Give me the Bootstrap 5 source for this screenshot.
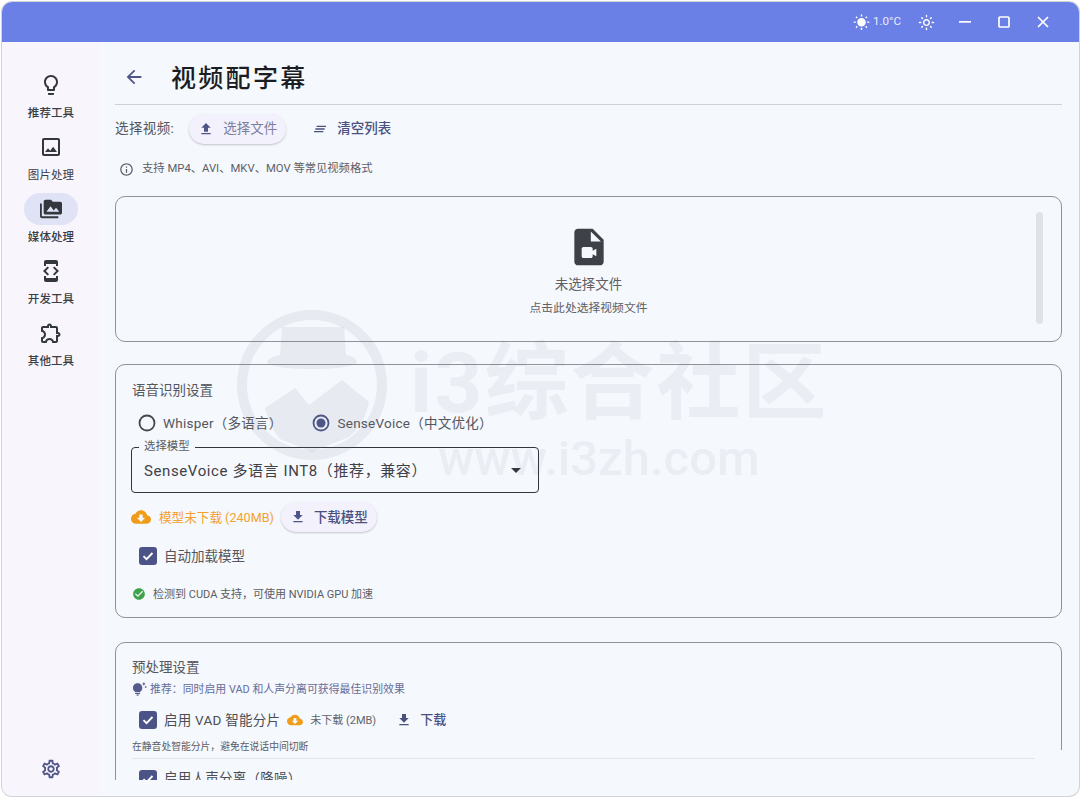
<!DOCTYPE html>
<html lang="zh">
<head>
<meta charset="utf-8">
<title>视频配字幕</title>
<link href="https://cdn.jsdelivr.net/npm/bootstrap@5.3.0/dist/css/bootstrap.min.css" rel="stylesheet">
<style>
html,body{height:100%;overflow:hidden;background:#fff;}
body{font-family:Roboto,"Noto Sans CJK SC",sans-serif;color:#45474f;font-size:13.5px;line-height:1.2;}
svg{fill:currentColor;flex:none;display:block;}
.appwin{position:relative;margin:2px 0 0 2px;width:1077px;height:794px;border-radius:10px;overflow:hidden;background:#f5f8fc;box-shadow:0 0 0 1px #d2d3d6;}
.tbar{height:40px;background:#6a80e6;color:#fff;padding-right:17px;}
.tempval{font-size:11.6px;opacity:.85;margin-left:3px;margin-right:17px;}
.tbtn{width:39px;height:24px;}
.tfirst{margin-left:10px;}
.sidecol{width:98px;background:#f8f5fc;padding-top:27px;}
.sideitem{height:62px;color:#35373e;}
.sidepill{width:54px;height:32px;border-radius:16px;}
.sidepill.on{background:#dfe3f5;}
.sidelabel{font-size:11.5px;margin-top:6px;color:#3b3d44;font-weight:500;letter-spacing:.1px;}
.sidelabel.thin{font-weight:400;}
.gearbtn{margin-top:auto;padding-bottom:16px;color:#4f5687;}
.contentclip{height:738px;overflow:hidden;padding:0 17px 0 15px;}
.headrow{height:63px;padding-top:8px;border-bottom:1px solid #cdd1d8;}
.backic{color:#4f5687;margin-left:8px;margin-right:26px;}
.pagetitle{font-size:25px;font-weight:500;color:#1c1d22;letter-spacing:2.3px;margin:2px 0 0;line-height:1;}
.toolrow{height:48px;padding-bottom:1px;}
.choosetxt{letter-spacing:.4px;margin-right:15px;color:#54565d;}
.pillbtn{height:30px;border-radius:15px;background:#f3f1fb;box-shadow:0 1px 2px rgba(60,60,90,.28);color:#7c7e9d;padding:0 9px;gap:9px;border:0;font-size:13.5px;}
.pillbtn svg{color:#4f5687;}
.darktxt{color:#4a5080;font-weight:500;gap:8px;}
.flatbtn{color:#4a5080;font-weight:500;gap:9px;padding:0 9px;margin-left:17px;}
.infonote{font-size:11.3px;color:#5d5f67;gap:8px;padding-left:4px;height:24px;margin-top:4px;}
.framebox{border:1px solid #8e9299;border-radius:10px;position:relative;}
.dropbox{height:146px;margin-top:15px;padding-top:4px;}
.dropicon{color:#3f4149;margin-top:-2px;}
.droptitle{font-size:13.5px;color:#5e6066;margin-top:7px;}
.dropsub{font-size:11.8px;color:#5e6066;margin-top:8px;}
.scrollthumb{position:absolute;right:18px;top:15px;width:7px;height:112px;border-radius:4px;background:#dfe2e7;}
.setbox1{height:254px;margin-top:22px;padding:17px 16px 0 16px;}
.setbox2{height:300px;margin-top:24px;padding:16px 16px 0 16px;}
.settitle{font-size:13.5px;color:#54565d;}
.radiorow{height:28px;margin-top:11px;font-size:13.5px;color:#54565d;letter-spacing:.25px;}
.radiodot{width:18px;height:18px;margin-left:6px;margin-right:7px;}
.radiogap{margin-left:30px;}
.selectbox{position:relative;width:408px;height:46px;margin-top:10px;margin-left:-1px;border:1.5px solid #34363d;border-radius:4px;padding:1px 12px 0;font-size:15px;letter-spacing:.6px;color:#3f4148;}
.selectlegend{position:absolute;left:7px;top:-8px;padding:0 5px;font-size:11.4px;letter-spacing:0;color:#5b5d64;background:#f5f8fc;line-height:13px;}
.caretmark{position:absolute;right:17px;top:20px;width:0;height:0;border-left:5px solid transparent;border-right:5px solid transparent;border-top:5px solid #35373e;}
.modelrow{margin-top:9px;height:30px;margin-left:-1px;}
.warntxt{color:#f4a12e;font-size:12.6px;margin-left:8px;margin-right:7px;}
.warnic{color:#f09c19;}
.tickrow{margin-top:9px;height:30px;padding-left:7px;color:#54565d;gap:7px;}
.tickbox{width:18px;height:18px;border-radius:3px;background:#4b5387;color:#fff;}
.greenrow{margin-top:16px;font-size:11px;color:#5b5d64;gap:7px;}
.greenic{color:#3fa14a;}
.tiprow{font-size:10.9px;color:#686c9a;margin-top:7px;gap:3px;}
.tiprow svg{color:#565b8d;}
.vadrow{margin-top:8px;height:30px;padding-left:7px;color:#4b4d54;gap:7px;letter-spacing:.25px;}
.minitxt{font-size:11px;color:#62646b;letter-spacing:0;margin-right:12px;}
.dlflat{color:#4a5080;font-size:13px;font-weight:500;gap:8px;margin-left:1px;letter-spacing:0;}
.subnote{font-size:9.8px;color:#5b5d64;margin-top:2px;height:21px;padding-top:4px;}
.lastrow{margin-right:-60px;border-top:1px solid #e4e6ea;background:#f5f8fc;position:relative;z-index:1;height:40px;padding:11px 0 0 7px;gap:7px;color:#4b4d54;letter-spacing:.25px;}
.lastrow::before{content:"";position:absolute;right:0;top:-9px;width:70px;height:9px;background:#f5f8fc;}
.markoverlay{position:absolute;left:0;top:0;width:100%;height:100%;pointer-events:none;z-index:5;}
.markcircle{position:absolute;left:234px;top:307px;}
.markname{position:absolute;left:408px;top:332px;font-size:84px;line-height:100px;font-weight:700;color:rgba(110,120,135,.08);letter-spacing:2px;white-space:nowrap;}
.markurl{position:absolute;left:436px;top:427px;font-size:49px;line-height:60px;font-weight:500;color:rgba(110,120,135,.08);white-space:nowrap;}
</style>
</head>
<body>
<div class="appwin d-flex flex-column">
  <div class="tbar d-flex align-items-center justify-content-end flex-shrink-0">
    <svg width="17" height="17" viewBox="0 0 24 24"><path d="M6.76 4.84l-1.8-1.79-1.41 1.41 1.79 1.79 1.42-1.41zM4 10.5H1v2h3v-2zm9-9.95h-2V3.5h2V.55zm7.45 3.91l-1.41-1.41-1.79 1.79 1.41 1.41 1.79-1.79zm-3.21 13.7l1.79 1.8 1.41-1.41-1.8-1.79-1.4 1.4zM20 10.5v2h3v-2h-3zm-8-5c-3.31 0-6 2.69-6 6s2.69 6 6 6 6-2.69 6-6-2.69-6-6-6zm-1 16.95h2V19.5h-2v2.95zm-7.45-3.91l1.41 1.41 1.79-1.8-1.41-1.41-1.79 1.8z"/></svg>
    <span class="tempval">1.0°C</span>
    <svg width="17" height="17" viewBox="0 0 24 24"><path d="M12 9c1.65 0 3 1.35 3 3s-1.35 3-3 3-3-1.35-3-3 1.35-3 3-3m0-2c-2.76 0-5 2.24-5 5s2.24 5 5 5 5-2.24 5-5-2.24-5-5-5zM2 13h2c.55 0 1-.45 1-1s-.45-1-1-1H2c-.55 0-1 .45-1 1s.45 1 1 1zm18 0h2c.55 0 1-.45 1-1s-.45-1-1-1h-2c-.55 0-1 .45-1 1s.45 1 1 1zM11 2v2c0 .55.45 1 1 1s1-.45 1-1V2c0-.55-.45-1-1-1s-1 .45-1 1zm0 18v2c0 .55.45 1 1 1s1-.45 1-1v-2c0-.55-.45-1-1-1s-1 .45-1 1zM5.99 4.58c-.39-.39-1.03-.39-1.41 0-.39.39-.39 1.03 0 1.41l1.06 1.06c.39.39 1.03.39 1.41 0s.39-1.03 0-1.41L5.99 4.58zm12.37 12.37c-.39-.39-1.03-.39-1.41 0-.39.39-.39 1.03 0 1.41l1.06 1.06c.39.39 1.03.39 1.41 0 .39-.39.39-1.03 0-1.41l-1.06-1.06zm1.06-10.96c.39-.39.39-1.03 0-1.41-.39-.39-1.03-.39-1.41 0l-1.06 1.06c-.39.39-.39 1.03 0 1.41s1.03.39 1.41 0l1.06-1.06zM7.05 18.36c.39-.39.39-1.03 0-1.41-.39-.39-1.03-.39-1.41 0l-1.06 1.06c-.39.39-.39 1.03 0 1.41s1.03.39 1.41 0l1.06-1.06z"/></svg>
    <div class="tbtn tfirst d-flex align-items-center justify-content-center"><svg width="14" height="14" viewBox="0 0 14 14"><rect x="1" y="6" width="12" height="1.7"/></svg></div>
    <div class="tbtn d-flex align-items-center justify-content-center"><svg width="14" height="14" viewBox="0 0 14 14" fill="none"><rect x="2" y="2" width="10" height="10" rx="1" fill="none" stroke="#fff" stroke-width="1.7"/></svg></div>
    <div class="tbtn d-flex align-items-center justify-content-center"><svg width="14" height="14" viewBox="0 0 14 14"><path d="M2 2l10 10M12 2L2 12" fill="none" stroke="#fff" stroke-width="1.7"/></svg></div>
  </div>
  <div class="d-flex flex-grow-1 overflow-hidden">
    <div class="sidecol d-flex flex-column align-items-center flex-shrink-0">
      <div class="sideitem d-flex flex-column align-items-center">
        <div class="sidepill d-flex align-items-center justify-content-center"><svg width="24" height="24" viewBox="0 0 24 24"><path d="M9 21c0 .55.45 1 1 1h4c.55 0 1-.45 1-1v-1H9v1zm3-19C8.14 2 5 5.14 5 9c0 2.38 1.19 4.47 3 5.74V17c0 .55.45 1 1 1h6c.55 0 1-.45 1-1v-2.26c1.81-1.27 3-3.36 3-5.74 0-3.86-3.14-7-7-7zm2.85 11.1l-.85.6V16h-4v-2.3l-.85-.6C7.8 12.16 7 10.63 7 9c0-2.76 2.24-5 5-5s5 2.24 5 5c0 1.63-.8 3.16-2.15 4.1z"/></svg></div>
        <div class="sidelabel">推荐工具</div>
      </div>
      <div class="sideitem d-flex flex-column align-items-center">
        <div class="sidepill d-flex align-items-center justify-content-center"><svg width="24" height="24" viewBox="0 0 24 24"><path d="M19 5v14H5V5h14m0-2H5c-1.1 0-2 .9-2 2v14c0 1.1.9 2 2 2h14c1.1 0 2-.9 2-2V5c0-1.1-.9-2-2-2zm-4.86 8.86l-3 3.87L9 13.14 6 17h12l-3.86-5.14z"/></svg></div>
        <div class="sidelabel thin">图片处理</div>
      </div>
      <div class="sideitem d-flex flex-column align-items-center">
        <div class="sidepill on d-flex align-items-center justify-content-center"><svg width="22" height="22" viewBox="0 0 24 24"><path d="M2 6H0v5h.01L0 20c0 1.1.9 2 2 2h18v-2H2V6zm20-2h-8l-2-2H6c-1.1 0-1.99.9-1.99 2L4 16c0 1.1.9 2 2 2h16c1.1 0 2-.9 2-2V6c0-1.1-.9-2-2-2zM7 15l4.5-6 3.5 4.51 2.5-3.01L21 15H7z"/></svg></div>
        <div class="sidelabel">媒体处理</div>
      </div>
      <div class="sideitem d-flex flex-column align-items-center">
        <div class="sidepill d-flex align-items-center justify-content-center"><svg width="24" height="24" viewBox="0 0 24 24"><path d="M7 5h10v2h2V3c0-1.1-.9-1.99-2-1.99L7 1c-1.1 0-2 .9-2 2v4h2V5zm8.41 11.59L20 12l-4.59-4.59L14 8.83 17.17 12 14 15.17l1.41 1.42zM10 15.17L6.83 12 10 8.83 8.59 7.41 4 12l4.59 4.59L10 15.17zM17 19H7v-2H5v4c0 1.1.9 2 2 2h10c1.1 0 2-.9 2-2v-4h-2v2z"/></svg></div>
        <div class="sidelabel">开发工具</div>
      </div>
      <div class="sideitem d-flex flex-column align-items-center">
        <div class="sidepill d-flex align-items-center justify-content-center"><svg width="24" height="24" viewBox="0 0 24 24"><path d="M10.5 4.5c.28 0 .5.22.5.5v2h6v6h2c.28 0 .5.22.5.5s-.22.5-.5.5h-2v6h-2.12c-.68-1.75-2.39-3-4.38-3s-3.7 1.25-4.38 3H4v-2.12c1.75-.68 3-2.39 3-4.38 0-1.99-1.24-3.7-2.99-4.38L4 7h6V5c0-.28.22-.5.5-.5m0-2C9.12 2.5 8 3.62 8 5H4c-1.1 0-1.99.9-1.99 2v3.8h.29c1.49 0 2.7 1.21 2.7 2.7s-1.21 2.7-2.7 2.7H2V20c0 1.1.9 2 2 2h3.8v-.3c0-1.49 1.21-2.7 2.7-2.7s2.7 1.21 2.7 2.7v.3H17c1.1 0 2-.9 2-2v-4c1.38 0 2.5-1.12 2.5-2.5S20.38 11 19 11V7c0-1.1-.9-2-2-2h-4c0-1.38-1.12-2.5-2.5-2.5z"/></svg></div>
        <div class="sidelabel">其他工具</div>
      </div>
      <div class="gearbtn"><svg width="22" height="22" viewBox="0 0 24 24"><path d="M19.43 12.98c.04-.32.07-.64.07-.98 0-.34-.03-.66-.07-.98l2.11-1.65c.19-.15.24-.42.12-.64l-2-3.46c-.09-.16-.26-.25-.44-.25-.06 0-.12.01-.17.03l-2.49 1c-.52-.4-1.08-.73-1.69-.98l-.38-2.65C14.46 2.18 14.25 2 14 2h-4c-.25 0-.46.18-.49.42l-.38 2.65c-.61.25-1.17.59-1.69.98l-2.49-1c-.06-.02-.12-.03-.18-.03-.17 0-.34.09-.43.25l-2 3.46c-.13.22-.07.49.12.64l2.11 1.65c-.04.32-.07.65-.07.98 0 .33.03.66.07.98l-2.11 1.65c-.19.15-.24.42-.12.64l2 3.46c.09.16.26.25.44.25.06 0 .12-.01.17-.03l2.49-1c.52.4 1.08.73 1.69.98l.38 2.65c.03.24.24.42.49.42h4c.25 0 .46-.18.49-.42l.38-2.65c.61-.25 1.17-.59 1.69-.98l2.49 1c.06.02.12.03.18.03.17 0 .34-.09.43-.25l2-3.46c.12-.22.07-.49-.12-.64l-2.11-1.65zm-1.98-1.71c.04.31.05.52.05.73 0 .21-.02.43-.05.73l-.14 1.13.89.7 1.08.84-.7 1.21-1.27-.51-1.04-.42-.9.68c-.43.32-.84.56-1.25.73l-1.06.43-.16 1.13-.2 1.35h-1.4l-.19-1.35-.16-1.13-1.06-.43c-.43-.18-.83-.41-1.23-.71l-.91-.7-1.06.43-1.27.51-.7-1.21 1.08-.84.89-.7-.14-1.13c-.03-.31-.05-.54-.05-.74s.02-.43.05-.73l.14-1.13-.89-.7-1.08-.84.7-1.21 1.27.51 1.04.42.9-.68c.43-.32.84-.56 1.25-.73l1.06-.43.16-1.13.2-1.35h1.39l.19 1.35.16 1.13 1.06.43c.43.18.83.41 1.23.71l.91.7 1.06-.43 1.27-.51.7 1.21-1.07.85-.89.7.14 1.13zM12 8c-2.21 0-4 1.79-4 4s1.79 4 4 4 4-1.79 4-4-1.79-4-4-4zm0 6c-1.1 0-2-.9-2-2s.9-2 2-2 2 .9 2 2-.9 2-2 2z"/></svg></div>
    </div>
    <div class="flex-grow-1 overflow-hidden">
      <div class="contentclip">
        <div class="headrow d-flex align-items-center">
          <svg class="backic" width="22" height="22" viewBox="0 0 24 24"><path d="M20 11H7.83l5.59-5.59L12 4l-8 8 8 8 1.41-1.41L7.83 13H20v-2z"/></svg>
          <h1 class="pagetitle">视频配字幕</h1>
        </div>
        <div class="toolrow d-flex align-items-center">
          <span class="choosetxt">选择视频:</span>
          <button class="pillbtn d-flex align-items-center" type="button"><svg width="16" height="16" viewBox="0 0 24 24"><path d="M9 16h6v-6h4l-7-7-7 7h4zm-4 2h14v2H5z"/></svg>选择文件</button>
          <div class="flatbtn d-flex align-items-center"><svg width="16" height="16" viewBox="0 0 24 24"><path d="M5 13h14v-2H5v2zm-2 4h14v-2H3v2zM7 7v2h14V7H7z"/></svg><span>清空列表</span></div>
        </div>
        <div class="infonote d-flex align-items-center"><svg width="15" height="15" viewBox="0 0 24 24"><path d="M11 7h2v2h-2zm0 4h2v6h-2zm1-9C6.48 2 2 6.48 2 12s4.48 10 10 10 10-4.48 10-10S17.52 2 12 2zm0 18c-4.41 0-8-3.59-8-8s3.59-8 8-8 8 3.59 8 8-3.59 8-8 8z"/></svg><span>支持 MP4、AVI、MKV、MOV 等常见视频格式</span></div>

        <div class="framebox dropbox d-flex flex-column align-items-center justify-content-center">
          <svg class="dropicon" width="44" height="44" viewBox="0 0 24 24"><path d="M14,2H6.01c-1.1,0-2,.89-2,2L4,20c0,1.1,.89,2,1.99,2H18c1.1,0,2-.9,2-2V8L14,2z M13,9V3.5L18.5,9H13z M14,14l2-1.06v4.12L14,16v1 c0,.55-.45,1-1,1H9c-.55,0-1-.45-1-1v-4c0-.55,.45-1,1-1h4c.55,0,1,.45,1,1V14z"/></svg>
          <div class="droptitle">未选择文件</div>
          <div class="dropsub">点击此处选择视频文件</div>
          <div class="scrollthumb"></div>
        </div>

        <div class="framebox setbox1">
          <div class="settitle">语音识别设置</div>
          <div class="radiorow d-flex align-items-center">
            <svg class="radiodot" viewBox="0 0 18 18"><circle cx="9" cy="9" r="7.5" fill="none" stroke="#45474f" stroke-width="1.8"/></svg>
            <span>Whisper（多语言）</span>
            <svg class="radiodot radiogap" viewBox="0 0 18 18"><circle cx="9" cy="9" r="7.5" fill="none" stroke="#4b5387" stroke-width="1.8"/><circle cx="9" cy="9" r="4.5" fill="#4b5387"/></svg>
            <span>SenseVoice（中文优化）</span>
          </div>
          <div class="selectbox d-flex align-items-center">
            <span class="selectlegend">选择模型</span>
            <span>SenseVoice 多语言 INT8（推荐，兼容）</span>
            <span class="caretmark"></span>
          </div>
          <div class="modelrow d-flex align-items-center">
            <svg class="warnic" width="20" height="20" viewBox="0 0 24 24"><path d="M19.35 10.04C18.67 6.59 15.64 4 12 4 9.11 4 6.6 5.64 5.35 8.04 2.34 8.36 0 10.91 0 14c0 3.31 2.69 6 6 6h13c2.76 0 5-2.24 5-5 0-2.64-2.05-4.78-4.65-4.96zM17 13l-5 5-5-5h3V9h4v4h3z"/></svg>
            <span class="warntxt">模型未下载 (240MB)</span>
            <button class="pillbtn darktxt d-flex align-items-center" type="button"><svg width="16" height="16" viewBox="0 0 24 24"><path d="M19 9h-4V3H9v6H5l7 7 7-7zM5 18v2h14v-2H5z"/></svg>下载模型</button>
          </div>
          <div class="tickrow d-flex align-items-center">
            <div class="tickbox d-flex align-items-center justify-content-center"><svg width="14" height="14" viewBox="0 0 14 14"><path d="M2.5 7.2l3 3 6-6.2" fill="none" stroke="#fff" stroke-width="1.9"/></svg></div>
            <span>自动加载模型</span>
          </div>
          <div class="greenrow d-flex align-items-center"><svg class="greenic" width="14" height="14" viewBox="0 0 24 24"><path d="M12 2C6.48 2 2 6.48 2 12s4.48 10 10 10 10-4.48 10-10S17.52 2 12 2zm-2 15l-5-5 1.41-1.41L10 14.17l7.59-7.59L19 8l-9 9z"/></svg><span>检测到 CUDA 支持，可使用 NVIDIA GPU 加速</span></div>
        </div>

        <div class="framebox setbox2">
          <div class="settitle">预处理设置</div>
          <div class="tiprow d-flex align-items-center"><svg width="15" height="15" viewBox="0 0 24 24"><path d="M7 20h4c0 1.1-.9 2-2 2s-2-.9-2-2zm-2-1h8v-2H5v2zm11.5-9.5c0 3.82-2.66 5.86-3.77 6.5H5.27C4.16 15.36 1.5 13.32 1.5 9.5 1.5 5.36 4.86 2 9 2s7.5 3.36 7.5 7.5zm4.87-2.13L20 8l1.37.63L22 10l.63-1.37L24 8l-1.37-.63L22 6l-.63 1.37zM19 6l.94-2.06L22 3l-2.06-.94L19 0l-.94 2.06L16 3l2.06.94L19 6z"/></svg><span>推荐：同时启用 VAD 和人声分离可获得最佳识别效果</span></div>
          <div class="vadrow d-flex align-items-center">
            <div class="tickbox d-flex align-items-center justify-content-center"><svg width="14" height="14" viewBox="0 0 14 14"><path d="M2.5 7.2l3 3 6-6.2" fill="none" stroke="#fff" stroke-width="1.9"/></svg></div>
            <span>启用 VAD 智能分片</span>
            <svg class="warnic" width="16" height="16" viewBox="0 0 24 24"><path d="M19.35 10.04C18.67 6.59 15.64 4 12 4 9.11 4 6.6 5.64 5.35 8.04 2.34 8.36 0 10.91 0 14c0 3.31 2.69 6 6 6h13c2.76 0 5-2.24 5-5 0-2.64-2.05-4.78-4.65-4.96zM17 13l-5 5-5-5h3V9h4v4h3z"/></svg>
            <span class="minitxt">未下载 (2MB)</span>
            <div class="dlflat d-flex align-items-center"><svg width="16" height="16" viewBox="0 0 24 24"><path d="M19 9h-4V3H9v6H5l7 7 7-7zM5 18v2h14v-2H5z"/></svg><span>下载</span></div>
          </div>
          <div class="subnote">在静音处智能分片，避免在说话中间切断</div>
          <div class="lastrow d-flex align-items-start">
            <div class="tickbox d-flex align-items-center justify-content-center"><svg width="14" height="14" viewBox="0 0 14 14"><path d="M2.5 7.2l3 3 6-6.2" fill="none" stroke="#fff" stroke-width="1.9"/></svg></div>
            <span>启用人声分离（降噪）</span>
          </div>
        </div>
      </div>
    </div>
  </div>
  <div class="markoverlay">
    <svg class="markcircle" width="152" height="152" viewBox="0 0 152 152">
      <g fill="rgba(110,120,135,.1)">
        <path fill-rule="evenodd" d="M76 1a75 75 0 1 0 0 150A75 75 0 1 0 76 1zm0 10a65 65 0 1 1 0 130A65 65 0 1 1 76 11z"/>
        <path d="M46 18h62l2 28c6 1 11 4 11 7 0 4-20 7-45 7s-45-3-45-7c0-3 8-6 13-7z"/>
        <path d="M29 99L59 79l14 17 33-25 27 22c-3 16-10 27-20 35l-37 15-32-13c-6-7-12-19-15-31z"/>
      </g>
    </svg>
    <div class="markname">i3综合社区</div>
    <div class="markurl">www.i3zh.com</div>
  </div>
</div>
<script src="https://cdn.jsdelivr.net/npm/bootstrap@5.3.0/dist/js/bootstrap.bundle.min.js"></script>
</body>
</html>
